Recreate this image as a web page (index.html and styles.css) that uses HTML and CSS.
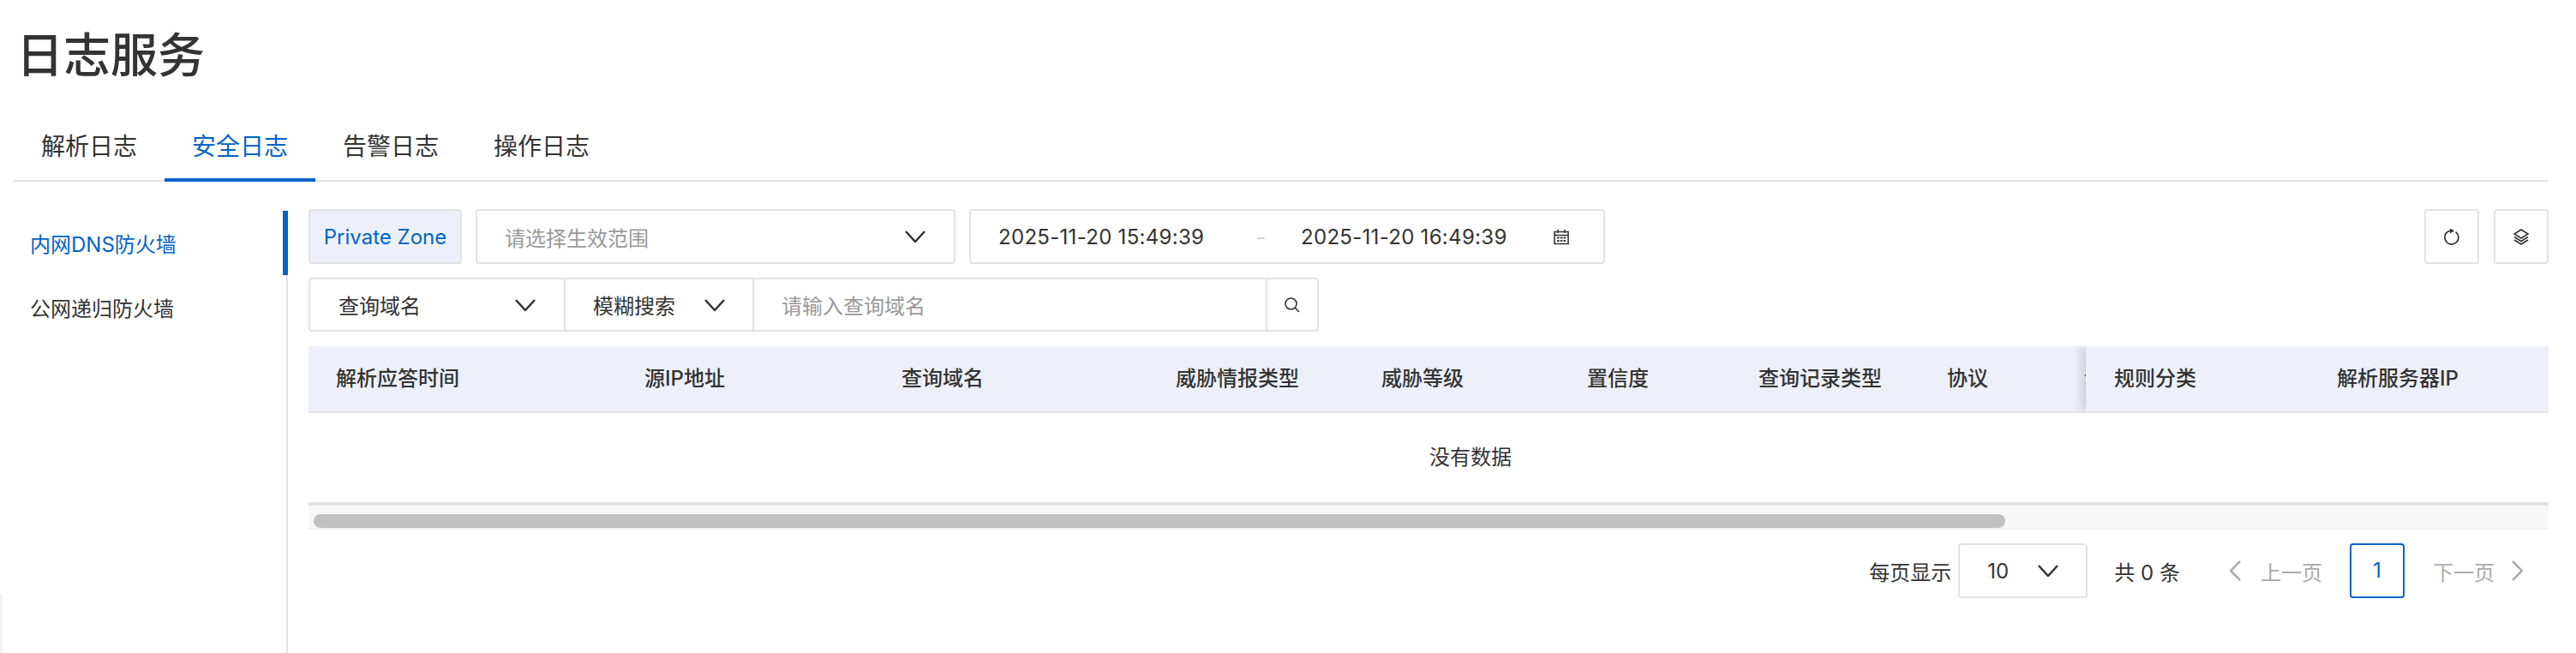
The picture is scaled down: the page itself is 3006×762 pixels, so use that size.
FILE: index.html
```html
<!DOCTYPE html>
<html lang="zh-CN">
<head>
    <meta charset="UTF-8">
    <meta name="viewport" content="width=device-width, initial-scale=1.0">
    <title>日志服务</title>
    <link rel="stylesheet" href="styles.css">
</head>
<body>
    <h1 class="page-title">日志服务</h1>

    <!-- Tab -->
    <div class="tabs">
        <div class="tab">解析日志</div>
        <div class="tab tab-active">安全日志</div>
        <div class="tab">告警日志</div>
        <div class="tab">操作日志</div>
    </div>

    <div class="main">
        <div class="side-nav">
            <div class="side-item side-item-active">内网DNS防火墙</div>
            <div class="side-item">公网递归防火墙</div>
        </div>

        <div class="content">
            <!-- Filtri -->
            <div class="filter-row">
                <div class="box zone-label">Private Zone</div>
                <div class="box scope-select">
                    <span class="placeholder">请选择生效范围</span>
                    <svg class="chevron" viewBox="0 0 24 14"><path d="M1 1l11 12L23 1"/></svg>
                </div>
                <div class="box date-range">
                    <span class="date-value">2025-11-20 15:49:39</span>
                    <span class="date-sep">-</span>
                    <span class="date-value">2025-11-20 16:49:39</span>
                    <svg class="icon date-icon" viewBox="0 0 18 18">
                        <path d="M1 3.500h16v14H1zM1 7.500h16M5 1v4M13 1v4"/>
                        <path class="dots" d="M4 9.500h2.500v2H4zM7.800 9.500h2.500v2H7.800zM11.500 9.500H14v2h-2.500zM4 13h2.500v2H4zM7.800 13h2.500v2H7.800zM11.500 13H14v2h-2.500z"/>
                    </svg>
                </div>
                <div class="tool-buttons">
                    <div class="box tool-button">
                        <svg class="icon" viewBox="0 0 18 18">
                            <path d="M13.500 3.600A8 8 0 1 1 7 2.300"/>
                            <path class="dots" d="M7 -0.500l5 3-5 3z"/>
                        </svg>
                    </div>
                    <div class="box tool-button">
                        <svg class="icon" viewBox="0 0 18 18">
                            <path d="M9 1l8 5-8 5-8-5zM1 9.500l8 5 8-5M1 13l8 5 8-5"/>
                        </svg>
                    </div>
                </div>
            </div>

            <div class="box search-row">
                <div class="search-part search-field">
                    <span>查询域名</span>
                    <svg class="chevron" viewBox="0 0 24 14"><path d="M1 1l11 12L23 1"/></svg>
                </div>
                <div class="search-part search-mode">
                    <span>模糊搜索</span>
                    <svg class="chevron" viewBox="0 0 24 14"><path d="M1 1l11 12L23 1"/></svg>
                </div>
                <div class="search-part search-input placeholder">请输入查询域名</div>
                <div class="search-button">
                    <svg class="icon" viewBox="0 0 18 18">
                        <circle cx="7.500" cy="7.500" r="6.500"/>
                        <path d="M12.300 12.300L17 17"/>
                    </svg>
                </div>
            </div>

            <!-- Tabella -->
            <div class="table">
                <div class="table-head">
                    <div class="head-scroll">
                        <div class="cell">解析应答时间</div>
                        <div class="cell">源IP地址</div>
                        <div class="cell">查询域名</div>
                        <div class="cell">威胁情报类型</div>
                        <div class="cell">威胁等级</div>
                        <div class="cell">置信度</div>
                        <div class="cell">查询记录类型</div>
                        <div class="cell">协议</div>
                        <div class="cell">动作</div>
                    </div>
                    <div class="head-fixed">
                        <div class="cell">规则分类</div>
                        <div class="cell">解析服务器IP</div>
                    </div>
                </div>
                <div class="table-empty">没有数据</div>
                <div class="scroll-track"><div class="scroll-thumb"></div></div>
            </div>

            <!-- Paginazione -->
            <div class="pager">
                <span class="page-size-label">每页显示</span>
                <div class="box page-size">
                    <span>10</span>
                    <svg class="chevron" viewBox="0 0 24 14"><path d="M1 1l11 12L23 1"/></svg>
                </div>
                <span class="page-total">共 0 条</span>
                <svg class="page-arrow page-prev" viewBox="0 0 13 24"><path d="M12 1L1 12l11 11"/></svg>
                <span class="page-link page-link-prev">上一页</span>
                <div class="page-current">1</div>
                <span class="page-link page-link-next">下一页</span>
                <svg class="page-arrow page-next" viewBox="0 0 13 24"><path d="M1 1l11 11L1 23"/></svg>
            </div>
        </div>
    </div>

    <div class="edge-shadow"></div>
</body>
</html>
```

FILE: styles.css
```css
* {
    box-sizing: border-box;
}

body {
    margin: 0;
    width: 3006px;
    height: 762px;
    overflow: hidden;
    background-color: #fff;
    color: #333;
    font-family: "Inter", "Noto Sans CJK SC", sans-serif;
    font-size: 24px;
}

.page-title {
    margin: 0;
    height: 132px;
    padding: 33px 0 0 19px;
    font-size: 55px;
    font-weight: 500;
    line-height: 62px;
}

.tabs {
    display: flex;
    height: 80px;
    margin: 0 32px 0 16px;
    border-bottom: 2px solid #e3e3e3;
}

.tab {
    width: 176px;
    height: 80px;
    text-align: center;
    font-size: 28px;
    line-height: 78px;
}

.tab-active {
    color: #0064c8;
    border-bottom: 4px solid #0064c8;
}

.main {
    display: flex;
    height: 550px;
    padding: 32px 32px 0 16px;
}

.side-nav {
    width: 320px;
    margin-top: 2px;
    border-right: 2px solid #e3e3e3;
}

.side-item {
    position: relative;
    height: 75px;
    padding-left: 19px;
    line-height: 80px;
}

.side-item-active {
    color: #0064c8;
}

.side-item-active::after {
    content: "";
    position: absolute;
    top: 0;
    right: -2px;
    width: 6px;
    height: 75px;
    background-color: #0064c8;
}

.content {
    width: 2614px;
    margin-left: 24px;
}

.box {
    display: flex;
    align-items: center;
    height: 64px;
    background-color: #fff;
    border: 2px solid #e3e3e3;
    border-radius: 4px;
}

.placeholder {
    color: #999;
}

.chevron {
    width: 24px;
    height: 14px;
    flex: none;
    fill: none;
    stroke: #333;
    stroke-width: 2.500;
}

.icon {
    width: 18px;
    height: 18px;
    flex: none;
    overflow: visible;
    fill: none;
    stroke: #333;
    stroke-width: 1.600;
}

.icon .dots {
    fill: #333;
    stroke: none;
}

.filter-row {
    display: flex;
}

.zone-label {
    width: 179px;
    justify-content: center;
    background-color: #edf0f9;
    color: #0064c8;
}

.scope-select {
    justify-content: space-between;
    width: 560px;
    margin-left: 16px;
    padding: 0 33px 0 32px;
}

.date-range {
    width: 742px;
    margin-left: 16px;
    padding-left: 32px;
}

.date-value {
    width: 240px;
    letter-spacing: 0.300px;
    white-space: nowrap;
}

.date-sep {
    width: 113px;
    padding-left: 61px;
    color: #ccc;
}

.date-icon {
    margin-left: 55px;
}

.tool-buttons {
    display: flex;
    gap: 17px;
    margin-left: auto;
}

.tool-button {
    width: 64px;
    justify-content: center;
}

.search-row {
    width: 1179px;
    height: 63px;
    margin-top: 16px;
}

.search-part {
    display: flex;
    align-items: center;
    height: 59px;
    border-right: 2px solid #e3e3e3;
}

.search-field {
    justify-content: space-between;
    width: 298px;
    padding: 0 33px;
}

.search-mode {
    justify-content: space-between;
    width: 220px;
    padding: 0 32px;
}

.search-input {
    width: 599px;
    padding-left: 32px;
}

.search-button {
    display: flex;
    align-items: center;
    justify-content: center;
    width: 58px;
}

.table {
    margin-top: 17px;
}

.table-head {
    display: flex;
    height: 78px;
    overflow: hidden;
    background-color: #edf0f9;
    border-bottom: 2px solid #e3e3e3;
    border-radius: 4px 4px 0 0;
    font-weight: 500;
}

.head-scroll {
    display: grid;
    grid-template-columns: 360px 300px 320px 240px 240px 200px 220px 160px 200px;
    width: 2074px;
    overflow: hidden;
}

.head-fixed {
    display: grid;
    grid-template-columns: 261px 279px;
    width: 540px;
    background-color: #edf0f9;
    box-shadow: -4px 0 12px rgba(0, 0, 0, 0.16);
}

.cell {
    padding-left: 32px;
    line-height: 76px;
    white-space: nowrap;
}

.head-fixed .cell:first-child {
    padding-left: 33px;
}

.table-empty {
    height: 104px;
    padding-left: 98px;
    text-align: center;
    line-height: 104px;
}

.scroll-track {
    height: 32px;
    padding: 10px 6px 0;
    background-color: #f8f8f8;
    border-top: 4px solid #e3e3e3;
    border-bottom: 2px solid #eee;
}

.scroll-thumb {
    width: 1974px;
    height: 16px;
    background-color: #c1c1c1;
    border-radius: 8px;
}

.pager {
    display: flex;
    align-items: center;
    justify-content: flex-end;
    height: 64px;
    margin-top: 16px;
    padding-right: 30px;
}

.page-size-label {
    margin-right: 8px;
}

.page-size {
    justify-content: space-between;
    width: 151px;
    padding: 0 32px;
}

.page-total {
    margin-left: 31px;
    margin-right: 58px;
}

.page-arrow {
    width: 13px;
    height: 24px;
    fill: none;
    stroke: #aaa;
    stroke-width: 2.500;
}

.page-link {
    color: #aaa;
}

.page-link-prev {
    margin-left: 23px;
}

.page-current {
    width: 64px;
    height: 64px;
    margin: 0 33px 0 32px;
    color: #0064c8;
    text-align: center;
    line-height: 60px;
    border: 2px solid #0064c8;
    border-radius: 4px;
}

.page-next {
    margin-left: 20px;
}

.edge-shadow {
    position: absolute;
    left: 0;
    top: 693px;
    width: 3px;
    height: 69px;
    background-color: #f3f3f3;
}
```
